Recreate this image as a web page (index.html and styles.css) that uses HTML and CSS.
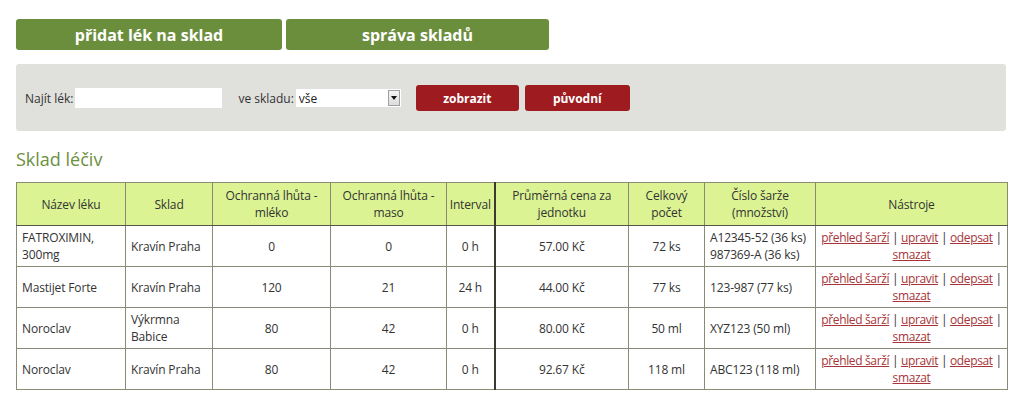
FILE: index.html
```html
<!DOCTYPE html>
<html lang="cs">
<head>
<meta charset="utf-8">
<title>Sklad léčiv</title>
<link rel="stylesheet" href="styles.css">
</head>
<body>
<div class="page">
  <nav class="tabs">
    <a class="tab tab-add" href="#">přidat lék na sklad</a>
    <a class="tab tab-manage" href="#">správa skladů</a>
  </nav>

  <form class="filter">
    <label class="lbl">Najít lék:</label>
    <input class="search" type="text">
    <label class="lbl lbl-store">ve skladu:</label>
    <span class="select-wrap">
      <select class="store"><option>vše</option></select>
      <span class="select-arrow"><span class="tri"></span></span>
    </span>
    <button class="btn btn-show" type="button">zobrazit</button>
    <button class="btn btn-reset" type="button">původní</button>
  </form>

  <h2 class="title">Sklad léčiv</h2>

  <table class="grid">
    <colgroup>
      <col class="c1"><col class="c2"><col class="c3"><col class="c4"><col class="c5">
      <col class="c6"><col class="c7"><col class="c8"><col class="c9">
    </colgroup>
    <thead>
      <tr>
        <th>Název léku</th>
        <th>Sklad</th>
        <th>Ochranná lhůta -<br>mléko</th>
        <th>Ochranná lhůta -<br>maso</th>
        <th>Interval</th>
        <th class="sep">Průměrná cena za<br>jednotku</th>
        <th>Celkový<br>počet</th>
        <th>Číslo šarže<br>(množství)</th>
        <th>Nástroje</th>
      </tr>
    </thead>
    <tbody>
      <tr>
        <td class="l">FATROXIMIN,<br>300mg</td>
        <td class="l">Kravín Praha</td>
        <td>0</td>
        <td>0</td>
        <td>0 h</td>
        <td class="sep">57.00 Kč</td>
        <td>72 ks</td>
        <td class="l">A12345-52 (36 ks)<br>987369-A (36 ks)</td>
        <td class="tools"><a href="#">přehled šarží</a> | <a href="#">upravit</a> | <a href="#">odepsat</a> |<br><a href="#">smazat</a></td>
      </tr>
      <tr>
        <td class="l">Mastijet Forte</td>
        <td class="l">Kravín Praha</td>
        <td>120</td>
        <td>21</td>
        <td>24 h</td>
        <td class="sep">44.00 Kč</td>
        <td>77 ks</td>
        <td class="l">123-987 (77 ks)</td>
        <td class="tools"><a href="#">přehled šarží</a> | <a href="#">upravit</a> | <a href="#">odepsat</a> |<br><a href="#">smazat</a></td>
      </tr>
      <tr>
        <td class="l">Noroclav</td>
        <td class="l">Výkrmna<br>Babice</td>
        <td>80</td>
        <td>42</td>
        <td>0 h</td>
        <td class="sep">80.00 Kč</td>
        <td>50 ml</td>
        <td class="l">XYZ123 (50 ml)</td>
        <td class="tools"><a href="#">přehled šarží</a> | <a href="#">upravit</a> | <a href="#">odepsat</a> |<br><a href="#">smazat</a></td>
      </tr>
      <tr>
        <td class="l">Noroclav</td>
        <td class="l">Kravín Praha</td>
        <td>80</td>
        <td>42</td>
        <td>0 h</td>
        <td class="sep">92.67 Kč</td>
        <td>118 ml</td>
        <td class="l">ABC123 (118 ml)</td>
        <td class="tools"><a href="#">přehled šarží</a> | <a href="#">upravit</a> | <a href="#">odepsat</a> |<br><a href="#">smazat</a></td>
      </tr>
    </tbody>
  </table>
</div>
</body>
</html>
```

FILE: styles.css
```css
* { box-sizing: border-box; }

html, body {
  margin: 0;
  padding: 0;
  background: #ffffff;
}

body {
  font-family: "Open Sans", "Liberation Sans", sans-serif;
  font-size: 12px;
  color: #333333;
}

.page {
  width: 991px;
  margin-left: 16px;
  padding-top: 19px;
}

.tabs {
  display: flex;
  gap: 4px;
}

.tab {
  display: flex;
  align-items: center;
  justify-content: center;
  height: 31px;
  background: #6b8e3d;
  color: #ffffff;
  font-weight: 700;
  font-size: 16px;
  text-decoration: none;
  border-radius: 3px;
}

.tab-add { width: 266px; }
.tab-manage { width: 263px; }

.filter {
  display: flex;
  align-items: center;
  width: 990px;
  height: 67px;
  margin-top: 14px;
  padding-left: 9px;
  padding-top: 1px;
  background: #e0e0dc;
  border-radius: 3px;
}

.lbl {
  font-size: 12px;
  color: #333333;
  margin-right: 2px;
}

.lbl-store { margin-left: 16px; margin-right: 2px; }

.search {
  width: 147px;
  height: 20px;
  border: 0;
  background: #ffffff;
  padding: 0 4px;
  font-family: inherit;
  font-size: 12px;
}

.select-wrap {
  position: relative;
  display: inline-block;
  width: 105px;
  height: 18px;
}

.store {
  -webkit-appearance: none;
  appearance: none;
  width: 105px;
  height: 18px;
  border: 0;
  border-radius: 0;
  background: #ffffff;
  padding: 0 3px;
  font-family: inherit;
  font-size: 12px;
  color: #222222;
}

.select-arrow {
  position: absolute;
  right: 1px;
  top: 1px;
  width: 12px;
  height: 16px;
  border: 1px solid #a0a0a0;
  background: linear-gradient(#f4f4f4, #dcdcdc);
  display: flex;
  align-items: center;
  justify-content: center;
  pointer-events: none;
}

.tri {
  width: 0;
  height: 0;
  border-left: 3px solid transparent;
  border-right: 3px solid transparent;
  border-top: 4px solid #111111;
}

.btn {
  height: 26px;
  border: 0;
  border-radius: 3px;
  background: #9e1c1f;
  color: #ffffff;
  font-family: inherit;
  font-weight: 700;
  font-size: 12px;
  padding: 0;
}

.btn-show { width: 103px; margin-left: 15px; }
.btn-reset { width: 105px; margin-left: 6px; }

.title {
  margin: 16px 0 0 0;
  font-size: 18px;
  font-weight: 400;
  color: #6b9040;
  line-height: 25px;
}

.grid {
  margin-top: 10px;
  width: 991px;
  border-collapse: collapse;
  table-layout: fixed;
  border: 1px solid #8a8a78;
}

.c1 { width: 109px; }
.c2 { width: 87px; }
.c3 { width: 118px; }
.c4 { width: 116px; }
.c5 { width: 48px; }
.c6 { width: 134px; }
.c7 { width: 76px; }
.c8 { width: 111px; }
.c9 { width: 192px; }

.grid th,
.grid td {
  border: 1px solid #8a8a78;
  line-height: 17px;
  text-align: center;
  vertical-align: middle;
  font-weight: 400;
  letter-spacing: -0.15px;
}

.grid th {
  height: 43px;
  padding: 3px 2px;
  background: #dbf393;
  color: #333333;
  border-bottom-color: #555548;
}

.grid td {
  height: 41px;
  padding: 3px 5px;
  background: #ffffff;
}

.grid .sep { border-left: 2px solid #3a3a30; }

.grid td.l { text-align: left; }

.grid td.tools {
  padding: 3px 1px;
  white-space: nowrap;
  color: #333333;
  letter-spacing: -0.35px;
}

.tools a {
  color: #a73438;
  text-decoration: underline;
}
```
